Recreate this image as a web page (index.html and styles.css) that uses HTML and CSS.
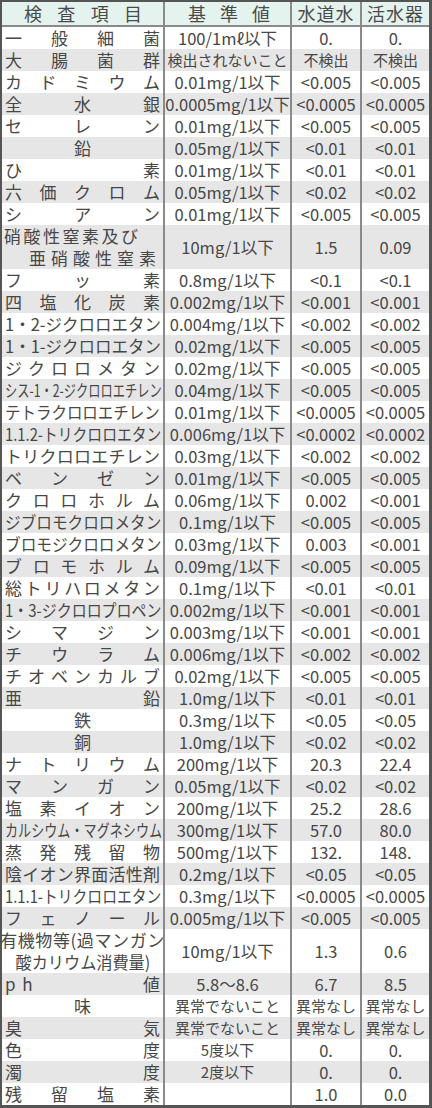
FILE: index.html
```html
<!DOCTYPE html>
<html lang="ja">
<head>
<meta charset="utf-8">
<title>水質検査結果</title>
<link rel="stylesheet" href="styles.css">
</head>
<body>
<table class="wq">
  <colgroup>
    <col class="c-name"><col class="c-std"><col class="c-tap"><col class="c-dev">
  </colgroup>
  <thead>
    <tr><th class="h-name">検査項目</th><th class="h-std">基準値</th><th>水道水</th><th>活水器</th></tr>
  </thead>
  <tbody>
    <tr><td class="n">一般細菌</td><td class="v">100/1mℓ以下</td><td class="r">0.</td><td class="r">0.</td></tr>
    <tr><td class="n">大腸菌群</td><td class="v k">検出されないこと</td><td class="r k">不検出</td><td class="r k">不検出</td></tr>
    <tr><td class="n">カドミウム</td><td class="v">0.01mg/1以下</td><td class="r">&lt;0.005</td><td class="r">&lt;0.005</td></tr>
    <tr><td class="n">全水銀</td><td class="v">0.0005mg/1以下</td><td class="r">&lt;0.0005</td><td class="r">&lt;0.0005</td></tr>
    <tr><td class="n">セレン</td><td class="v">0.01mg/1以下</td><td class="r">&lt;0.005</td><td class="r">&lt;0.005</td></tr>
    <tr><td class="n ctr">鉛</td><td class="v">0.05mg/1以下</td><td class="r">&lt;0.01</td><td class="r">&lt;0.01</td></tr>
    <tr><td class="n">ひ素</td><td class="v">0.01mg/1以下</td><td class="r">&lt;0.01</td><td class="r">&lt;0.01</td></tr>
    <tr><td class="n">六価クロム</td><td class="v">0.05mg/1以下</td><td class="r">&lt;0.02</td><td class="r">&lt;0.02</td></tr>
    <tr><td class="n">シアン</td><td class="v">0.01mg/1以下</td><td class="r">&lt;0.005</td><td class="r">&lt;0.005</td></tr>
    <tr class="dbl"><td class="n2"><div class="l1">硝酸性窒素及び</div><div class="l2">亜硝酸性窒素</div></td><td class="v">10mg/1以下</td><td class="r">1.5</td><td class="r">0.09</td></tr>
    <tr><td class="n">フッ素</td><td class="v">0.8mg/1以下</td><td class="r">&lt;0.1</td><td class="r">&lt;0.1</td></tr>
    <tr><td class="n">四塩化炭素</td><td class="v">0.002mg/1以下</td><td class="r">&lt;0.001</td><td class="r">&lt;0.001</td></tr>
    <tr><td class="n sqc"><span class="sq s97">1・2-ジクロロエタン</span></td><td class="v">0.004mg/1以下</td><td class="r">&lt;0.002</td><td class="r">&lt;0.002</td></tr>
    <tr><td class="n sqc"><span class="sq s97">1・1-ジクロロエタン</span></td><td class="v">0.02mg/1以下</td><td class="r">&lt;0.005</td><td class="r">&lt;0.005</td></tr>
    <tr><td class="n">ジクロロメタン</td><td class="v">0.02mg/1以下</td><td class="r">&lt;0.005</td><td class="r">&lt;0.005</td></tr>
    <tr><td class="n sqc"><span class="sq s72">シス-1・2-ジクロロエチレン</span></td><td class="v">0.04mg/1以下</td><td class="r">&lt;0.005</td><td class="r">&lt;0.005</td></tr>
    <tr><td class="n sqc"><span class="sq s91">テトラクロロエチレン</span></td><td class="v">0.01mg/1以下</td><td class="r">&lt;0.0005</td><td class="r">&lt;0.0005</td></tr>
    <tr><td class="n sqc"><span class="sq s87">1.1.2-トリクロロエタン</span></td><td class="v">0.006mg/1以下</td><td class="r">&lt;0.0002</td><td class="r">&lt;0.0002</td></tr>
    <tr><td class="n">トリクロロエチレン</td><td class="v">0.03mg/1以下</td><td class="r">&lt;0.002</td><td class="r">&lt;0.002</td></tr>
    <tr><td class="n">ベンゼン</td><td class="v">0.01mg/1以下</td><td class="r">&lt;0.005</td><td class="r">&lt;0.005</td></tr>
    <tr><td class="n">クロロホルム</td><td class="v">0.06mg/1以下</td><td class="r">0.002</td><td class="r">&lt;0.001</td></tr>
    <tr><td class="n sqc"><span class="sq s92">ジブロモクロロメタン</span></td><td class="v">0.1mg/1以下</td><td class="r">&lt;0.005</td><td class="r">&lt;0.005</td></tr>
    <tr><td class="n sqc"><span class="sq s92">ブロモジクロロメタン</span></td><td class="v">0.03mg/1以下</td><td class="r">0.003</td><td class="r">&lt;0.001</td></tr>
    <tr><td class="n">ブロモホルム</td><td class="v">0.09mg/1以下</td><td class="r">&lt;0.005</td><td class="r">&lt;0.005</td></tr>
    <tr><td class="n">総トリハロメタン</td><td class="v">0.1mg/1以下</td><td class="r">&lt;0.01</td><td class="r">&lt;0.01</td></tr>
    <tr><td class="n sqc"><span class="sq s88">1・3-ジクロロプロペン</span></td><td class="v">0.002mg/1以下</td><td class="r">&lt;0.001</td><td class="r">&lt;0.001</td></tr>
    <tr><td class="n">シマジン</td><td class="v">0.003mg/1以下</td><td class="r">&lt;0.001</td><td class="r">&lt;0.001</td></tr>
    <tr><td class="n">チウラム</td><td class="v">0.006mg/1以下</td><td class="r">&lt;0.002</td><td class="r">&lt;0.002</td></tr>
    <tr><td class="n">チオベンカルブ</td><td class="v">0.02mg/1以下</td><td class="r">&lt;0.005</td><td class="r">&lt;0.005</td></tr>
    <tr><td class="n">亜鉛</td><td class="v">1.0mg/1以下</td><td class="r">&lt;0.01</td><td class="r">&lt;0.01</td></tr>
    <tr><td class="n ctr">鉄</td><td class="v">0.3mg/1以下</td><td class="r">&lt;0.05</td><td class="r">&lt;0.05</td></tr>
    <tr><td class="n ctr">銅</td><td class="v">1.0mg/1以下</td><td class="r">&lt;0.02</td><td class="r">&lt;0.02</td></tr>
    <tr><td class="n">ナトリウム</td><td class="v">200mg/1以下</td><td class="r">20.3</td><td class="r">22.4</td></tr>
    <tr><td class="n">マンガン</td><td class="v">0.05mg/1以下</td><td class="r">&lt;0.02</td><td class="r">&lt;0.02</td></tr>
    <tr><td class="n">塩素イオン</td><td class="v">200mg/1以下</td><td class="r">25.2</td><td class="r">28.6</td></tr>
    <tr><td class="n sqc"><span class="sq s77">カルシウム・マグネシウム</span></td><td class="v">300mg/1以下</td><td class="r">57.0</td><td class="r">80.0</td></tr>
    <tr><td class="n">蒸発残留物</td><td class="v">500mg/1以下</td><td class="r">132.</td><td class="r">148.</td></tr>
    <tr><td class="n">陰イオン界面活性剤</td><td class="v">0.2mg/1以下</td><td class="r">&lt;0.05</td><td class="r">&lt;0.05</td></tr>
    <tr><td class="n sqc"><span class="sq s87">1.1.1-トリクロロエタン</span></td><td class="v">0.3mg/1以下</td><td class="r">&lt;0.0005</td><td class="r">&lt;0.0005</td></tr>
    <tr><td class="n">フェノール</td><td class="v">0.005mg/1以下</td><td class="r">&lt;0.005</td><td class="r">&lt;0.005</td></tr>
    <tr class="dbl"><td class="n2"><div class="mid"><span class="sqm w1">有機物等(過マンガン</span></div><div class="mid"><span class="sqm s95">酸カリウム消費量)</span></div></td><td class="v">10mg/1以下</td><td class="r">1.3</td><td class="r">0.6</td></tr>
    <tr><td class="n"><div class="split"><span>p h</span><span>値</span></div></td><td class="v">5.8～8.6</td><td class="r">6.7</td><td class="r">8.5</td></tr>
    <tr><td class="n ctr">味</td><td class="v k">異常でないこと</td><td class="r k">異常なし</td><td class="r k">異常なし</td></tr>
    <tr><td class="n">臭気</td><td class="v k">異常でないこと</td><td class="r k">異常なし</td><td class="r k">異常なし</td></tr>
    <tr><td class="n">色度</td><td class="v k">5度以下</td><td class="r">0.</td><td class="r">0.</td></tr>
    <tr><td class="n">濁度</td><td class="v k">2度以下</td><td class="r">0.</td><td class="r">0.</td></tr>
    <tr><td class="n">残留塩素</td><td class="v"></td><td class="r">1.0</td><td class="r">0.0</td></tr>
  </tbody>
</table>
</body>
</html>
```
FILE: styles.css
```css
html, body {
  margin: 0;
  padding: 0;
  background: #ffffff;
}
body {
  font-family: "Noto Sans CJK JP", "Noto Sans", sans-serif;
  color: #474747;
}
.wq {
  width: 432px;
  table-layout: fixed;
  border-collapse: separate;
  border-spacing: 0;
  border-top: 2px solid #555555;
  border-left: 2px solid #555555;
  border-right: 3px solid #555555;
  border-bottom: 3px solid #555555;
}
.c-name { width: 161px; }
.c-std { width: 127px; }
.c-tap { width: 70px; }
.c-dev { width: 69px; }

th, td {
  padding: 0;
  vertical-align: middle;
  overflow: visible;
}
th + th, td + td {
  border-left: 2px solid #8a8a8a;
}
thead th {
  height: 23px;
  line-height: 23px;
  background: #e5f3ef;
  border-bottom: 2px solid #8a8a8a;
  font-weight: normal;
  font-size: 18px;
  letter-spacing: 1px;
  text-align: center;
  color: #4a4a4a;
}
thead th.h-name {
  padding: 0 20px 0 22px;
  text-align: justify;
  text-align-last: justify;
}
thead th.h-std {
  padding: 0 19px 0 23px;
  text-align: justify;
  text-align-last: justify;
}
tbody td {
  height: 22px;
  line-height: 22px;
}
tbody tr:nth-child(even) td {
  background: #e6e6e6;
}
tbody tr.dbl td {
  height: 44px;
}
.n {
  font-size: 17px;
  padding: 0 3px 0 3px;
  text-align: justify;
  text-align-last: justify;
  white-space: nowrap;
}
.n.ctr {
  text-align: center;
  text-align-last: center;
}
.n.sqc {
  text-align: left;
  text-align-last: left;
}
.sq {
  display: inline-block;
  white-space: nowrap;
  transform-origin: 0 50%;
}
.s97 { transform: scaleX(0.97); }
.s95 { transform: scaleX(0.95); }
.s92 { transform: scaleX(0.92); }
.s91 { transform: scaleX(0.91); }
.s88 { transform: scaleX(0.88); }
.s87 { transform: scaleX(0.87); }
.s77 { transform: scaleX(0.77); }
.s72 { transform: scaleX(0.72); }
.w1 { letter-spacing: 0.6px; }

.n2 {
  font-size: 17px;
  padding: 0 2px;
}
.l1 {
  text-align: left;
  letter-spacing: 2.5px;
  white-space: nowrap;
}
.l2 {
  text-align: right;
  letter-spacing: 5px;
  white-space: nowrap;
}
.mid {
  display: flex;
  justify-content: center;
  white-space: nowrap;
}
.sqm {
  display: inline-block;
  white-space: nowrap;
  transform-origin: 50% 50%;
}
.split {
  display: flex;
  justify-content: space-between;
}
.split span:first-child {
  word-spacing: 3px;
}
.v {
  font-size: 16.5px;
  text-align: center;
  white-space: nowrap;
}
.r {
  font-size: 16.5px;
  text-align: center;
  white-space: nowrap;
}
.k {
  font-size: 15px;
}
```
